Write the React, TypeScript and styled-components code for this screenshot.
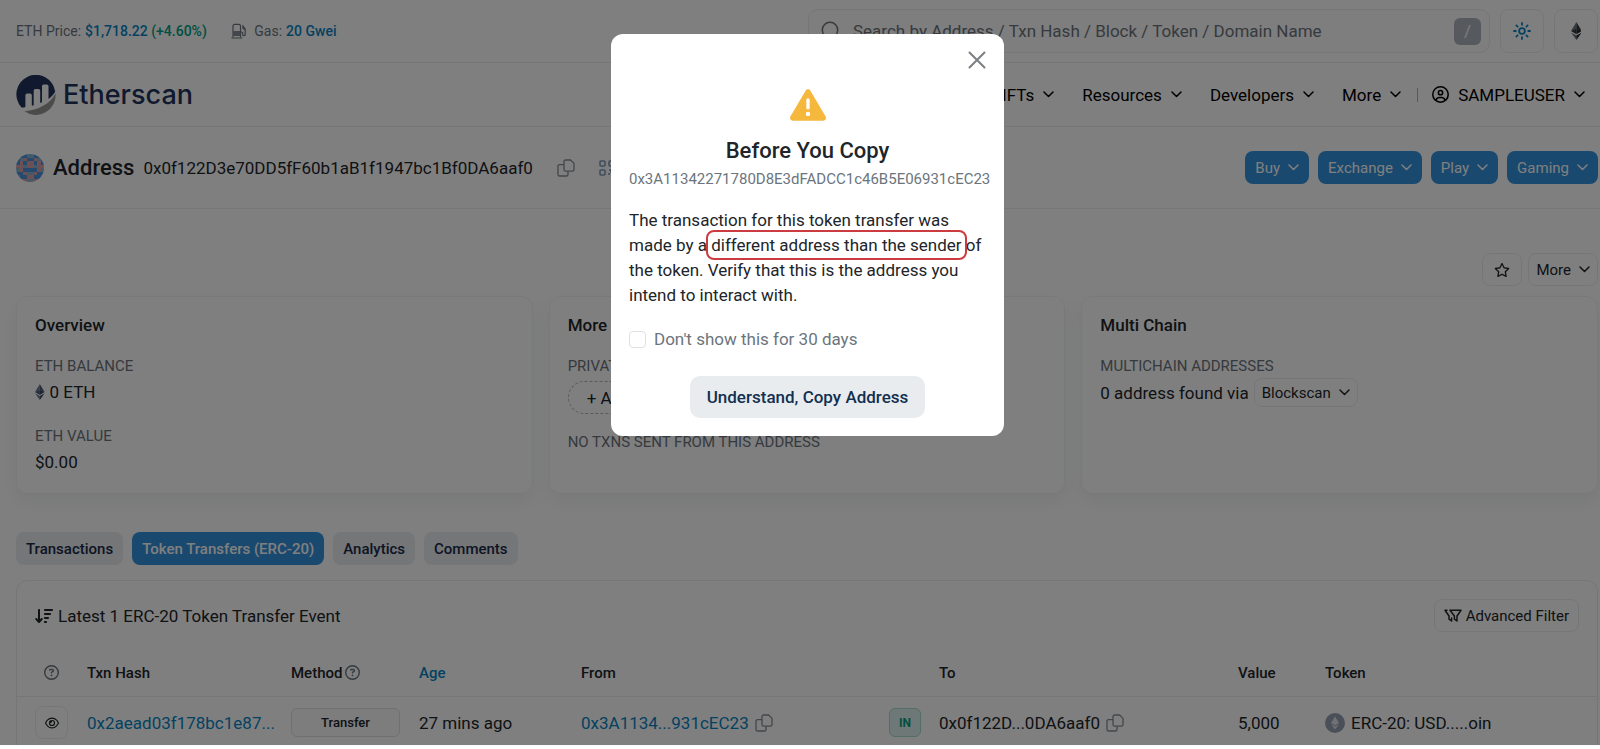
import React from "react";
import styled, { createGlobalStyle, css } from "styled-components";
import {
  FaTriangleExclamation,
  FaRegCircleQuestion,
  FaRegCircleUser,
  FaArrowDownWideShort,
  FaRegEye,
  FaRegStar,
} from "react-icons/fa6";

const GlobalStyle = createGlobalStyle`
  *, *::before, *::after { box-sizing: border-box; }
  body {
    margin: 0;
    background: #fff;
    color: #212529;
    font-family: Roboto, "Liberation Sans", sans-serif;
    font-size: 17px;
    line-height: 24px;
  }
  button, input { font: inherit; color: inherit; }
  button { cursor: pointer; }
  a { color: #0784c3; text-decoration: none; }
  h1, h2, h3, p { margin: 0; }
  svg { display: block; flex: none; }
`;

/* ---------- icons ---------- */

const Chevron = () => (
  <svg width="11" height="7" viewBox="0 0 11 7" fill="none" stroke="currentColor" strokeWidth="1.5" strokeLinecap="round" strokeLinejoin="round" aria-hidden="true">
    <path d="M1 1l4.5 4.5L10 1" />
  </svg>
);

const CopyIcon = () => (
  <svg width="18" height="18" viewBox="0 0 18 18" fill="none" stroke="#868e96" strokeWidth="1.3" strokeLinejoin="round" aria-hidden="true">
    <path d="M8.600 1h5L17 4.400v6.200a1.600 1.600 0 0 1-1.600 1.600H8.600A1.600 1.600 0 0 1 7 10.600V2.600A1.600 1.600 0 0 1 8.600 1z" />
    <path d="M7 5.600H2.600A1.600 1.600 0 0 0 1 7.200v8.200A1.600 1.600 0 0 0 2.600 17h6.800a1.600 1.600 0 0 0 1.600-1.600v-3.200" />
  </svg>
);

const QrIcon = () => (
  <svg width="16" height="16" viewBox="0 0 16 16" fill="none" stroke="#7f9bb5" strokeWidth="1.6" aria-hidden="true">
    <rect x="1" y="1" width="5" height="5" rx="1" />
    <rect x="10" y="1" width="5" height="5" rx="1" />
    <rect x="1" y="10" width="5" height="5" rx="1" />
    <path d="M10 10h2v2h3v3h-2M10 13v2" />
  </svg>
);

const GasIcon = () => (
  <svg width="16" height="16" viewBox="0 0 16 16" fill="none" stroke="#6c757d" strokeWidth="1.2" strokeLinecap="round" strokeLinejoin="round" aria-hidden="true">
    <path d="M2 14V3a1.600 1.600 0 0 1 1.600-1.600h4.300A1.600 1.600 0 0 1 9.500 3v11" />
    <rect x="2.300" y="8" width="7" height="5" fill="#868e96" stroke="none" />
    <path d="M.8 15h10M9.600 9h.9a1.200 1.200 0 0 1 1.200 1.200v1.300a1.200 1.200 0 0 0 2.500 0V6L11.700 2.600M12 3.500v2.200l2.200.8" />
  </svg>
);

const SearchIcon = () => (
  <svg width="20" height="20" viewBox="0 0 20 20" fill="none" stroke="#6c757d" strokeWidth="1.5" strokeLinecap="round" aria-hidden="true">
    <circle cx="9" cy="9" r="7.700" />
    <path d="M14.600 14.600L19 19" />
  </svg>
);

const SunIcon = () => (
  <svg width="18" height="18" viewBox="0 0 18 18" fill="none" stroke="#0784c3" strokeWidth="1.800" strokeLinecap="round" aria-hidden="true">
    <circle cx="9" cy="9" r="2.900" />
    <path d="M9 1v1.800M9 15.200V17M1 9h1.800M15.200 9H17M3.400 3.400l1.200 1.200M13.400 13.400l1.200 1.200M3.400 14.600l1.200-1.200M13.400 4.600l1.200-1.200" />
  </svg>
);

const EthIcon = ({ size = 18, dark = "#212529", mid = "#343a40", light = "#6c757d" }) => (
  <svg width={size * 0.6} height={size} viewBox="0 0 12 20" aria-hidden="true">
    <path d="M6 0L0 10l6-2.700z" fill={light} />
    <path d="M6 0l6 10-6-2.700z" fill={mid} />
    <path d="M0 10l6-2.700V13.600z" fill={mid} />
    <path d="M12 10L6 7.300v6.300z" fill={dark} />
    <path d="M0 11.600l6 3.500V20z" fill={light} />
    <path d="M12 11.600l-6 3.500V20z" fill={dark} />
  </svg>
);

const FilterIcon = () => (
  <svg width="18" height="14" viewBox="0 0 18 14" fill="none" stroke="currentColor" strokeWidth="1.500" strokeLinejoin="round" strokeLinecap="round" aria-hidden="true">
    <path d="M6 1.200h11L13 7v5l-2.600-1.800V7z" />
    <path d="M3 1.200H1L5 7v3.200L7.600 12V9" />
  </svg>
);

const CloseIcon = () => (
  <svg width="18" height="18" viewBox="0 0 18 18" fill="none" stroke="#7b7f83" strokeWidth="2" strokeLinecap="round" aria-hidden="true">
    <path d="M1.500 1.500l15 15M16.500 1.500l-15 15" />
  </svg>
);

const TokenIcon = () => (
  <svg width="20" height="20" viewBox="0 0 20 20" aria-hidden="true">
    <circle cx="10" cy="10" r="10" fill="#979eb0" />
    <path d="M10 3.500L6 10l4 2.400L14 10zM6 11.200l4 5.300 4-5.300-4 2.400z" fill="#dfe3ea" />
  </svg>
);

const LogoMark = () => (
  <svg width="40" height="40" viewBox="0 0 40 40" aria-hidden="true">
    <path
      fill="#21325b"
      d="M5.500 32.500A19.500 19.500 0 1 1 39.200 16.800c-1.700 3-4.200 5.300-6.700 7.100V11.300a1.700 1.700 0 0 0-1.700-1.700h-3.100a1.700 1.700 0 0 0-1.700 1.700v15.900l-1.800.9V15.700a1.700 1.700 0 0 0-1.700-1.700h-3.100a1.700 1.700 0 0 0-1.700 1.700v14.500l-1.900.5V20.200a1.700 1.700 0 0 0-1.700-1.700h-3a1.700 1.700 0 0 0-1.700 1.700v11c0 .7-.5 1.200-1.200 1.200z"
    />
    <path fill="#979695" d="M39.500 18.500A19.600 19.600 0 0 1 8.500 36.200C22 35.300 34.300 28.800 39.500 18.500z" />
  </svg>
);

const identicon = [
  "cbbccbbc",
  "bcpbbpcb",
  "bpbppbpb",
  "ppcppcpp",
  "cpbbbbpc",
  "bbpccpbb",
  "cbbppbbc",
  "pppccppp",
];
const identiconColors: Record<string, string> = { b: "#4a94dc", c: "#86b4d6", p: "#d9a0a8" };

const Identicon = () => (
  <svg width="28" height="28" viewBox="0 0 8 8" shapeRendering="crispEdges" aria-hidden="true">
    <clipPath id="avatar"><circle cx="4" cy="4" r="4" /></clipPath>
    <g clipPath="url(#avatar)">
      {identicon.flatMap((row, y) =>
        row.split("").map((c, x) => <rect key={`${x}-${y}`} x={x} y={y} width="1" height="1" fill={identiconColors[c]} />)
      )}
    </g>
  </svg>
);

/* ---------- layout ---------- */

const line = "#eaedf0";

const Page = styled.div`
  position: relative;
  overflow: hidden;
`;

const Bar = styled.div<{ $height: number }>`
  display: flex;
  align-items: center;
  justify-content: space-between;
  height: ${(p) => p.$height}px;
  padding: 0 2px 0 16px;
  border-bottom: 1px solid ${line};
`;

const Group = styled.div<{ $gap: number }>`
  display: flex;
  align-items: center;
  gap: ${(p) => p.$gap}px;
`;

const Stat = styled.span`
  display: inline-flex;
  align-items: center;
  gap: 4px;
  font-size: 14px;
  color: #6c757d;
  a { font-weight: 500; }
`;

const Up = styled.span`
  color: #00a186;
`;

const SearchBox = styled.label`
  display: flex;
  align-items: center;
  gap: 12px;
  width: 682px;
  height: 44px;
  padding: 0 8px 0 12px;
  border: 1px solid ${line};
  border-radius: 10px;
  background: #fcfcfd;
`;

const SearchInput = styled.input`
  flex: 1;
  min-width: 0;
  border: 0;
  padding: 0;
  background: transparent;
  outline: none;
  &::placeholder { color: #6c757d; opacity: 1; }
`;

const KeyHint = styled.kbd`
  display: grid;
  place-items: center;
  width: 27px;
  height: 27px;
  border-radius: 6px;
  background: #adb5bd;
  color: #f8f9fa;
  font: 17px Roboto, sans-serif;
`;

const SquareButton = styled.button<{ $size: number }>`
  display: grid;
  place-items: center;
  width: ${(p) => p.$size}px;
  height: ${(p) => p.$size}px;
  padding: 0;
  border: 1px solid ${line};
  border-radius: 8px;
  background: #fff;
`;

const Logo = styled.a`
  display: flex;
  align-items: center;
  gap: 7px;
  color: #21325b;
  font: 500 27px/32px Inter, sans-serif;
`;

const Nav = styled.nav`
  display: flex;
  align-items: center;
  gap: 28px;
  padding-right: 13px;
`;

const NavItem = styled.button`
  display: flex;
  align-items: center;
  gap: 9px;
  padding: 0;
  border: 0;
  background: none;
  color: #000;
`;

const Account = styled.div`
  display: flex;
  align-items: center;
  gap: 14px;
  margin-left: -12px;
`;

const Divider = styled.span`
  width: 1px;
  height: 14px;
  background: #adb5bd;
`;

const Title = styled.h1`
  font-size: 22px;
  font-weight: 500;
`;

const IconButton = styled.button`
  padding: 0;
  border: 0;
  background: none;
`;

const pill = css`
  display: inline-flex;
  align-items: center;
  justify-content: center;
  height: 33px;
  border-radius: 8px;
  font-size: 15px;
`;

const PrimaryButton = styled.button`
  ${pill}
  gap: 8px;
  padding: 0 10px;
  border: 0;
  background: #3392de;
  color: #fff;
`;

const OutlineButton = styled.button<{ $gap?: number; $pad?: number; $small?: boolean }>`
  ${pill}
  gap: ${(p) => p.$gap ?? 8}px;
  padding: 0 ${(p) => p.$pad ?? 7}px;
  border: 1px solid ${line};
  background: #fff;
  ${(p) => p.$small && "height: 29px;"}
`;

const Main = styled.main`
  padding: 44px 2px 0 16px;
`;

const Tools = styled.div`
  display: flex;
  justify-content: flex-end;
  gap: 6px;
`;

const Cards = styled.section`
  display: grid;
  grid-template-columns: repeat(3, 1fr);
  gap: 16px;
  margin-top: 10px;
`;

const Card = styled.article`
  min-height: 198px;
  padding: 16px 18px;
  border: 1px solid #f1f3f6;
  border-radius: 12px;
  box-shadow: 0 8px 18px rgba(140, 152, 164, 0.12);
`;

const CardTitle = styled.h3`
  font-size: 17px;
  font-weight: 500;
`;

const Field = styled.div<{ $top: number }>`
  margin-top: ${(p) => p.$top}px;
`;

const Label = styled.div`
  font-size: 15px;
  line-height: 24px;
  color: #6c757d;
  text-transform: uppercase;
`;

const Value = styled.div`
  display: flex;
  align-items: center;
  gap: 5px;
  min-height: 28px;
`;

const AddTag = styled.button`
  display: block;
  height: 33px;
  margin-top: 3px;
  padding: 0 18px;
  border: 1px dashed #adb5bd;
  border-radius: 17px;
  background: none;
`;

const Tabs = styled.div`
  display: flex;
  gap: 9px;
  margin-top: 38px;
`;

const Tab = styled.button<{ $active?: boolean }>`
  ${pill}
  padding: 0 10px;
  border: 0;
  font-weight: 500;
  background: ${(p) => (p.$active ? "#3392de" : "#e9ecef")};
  color: ${(p) => (p.$active ? "#fff" : "#1b2a4a")};
`;

const TableCard = styled.section`
  margin-top: 15px;
  border: 1px solid ${line};
  border-bottom: 0;
  border-radius: 12px 12px 0 0;
`;

const TableHead = styled.div`
  display: flex;
  align-items: center;
  justify-content: space-between;
  padding: 18px;
`;

const Table = styled.table`
  width: 100%;
  table-layout: fixed;
  border-collapse: collapse;

  th, td { padding: 0; text-align: left; white-space: nowrap; }
  th { height: 46px; font-size: 15px; font-weight: 500; border-bottom: 1px solid ${line}; }
  td { height: 49px; padding-top: 4px; }
  th:first-child, td:first-child { padding-left: 18px; }
`;

const HelpCell = styled.span`
  display: grid;
  place-items: center;
  width: 33px;
  color: #6c757d;
`;

const HeadLabel = styled.span`
  display: inline-flex;
  align-items: center;
  gap: 3px;
  svg { color: #6c757d; }
`;

const MethodTag = styled.span`
  display: grid;
  place-items: center;
  width: 109px;
  height: 29px;
  border: 1px solid #dde1e5;
  border-radius: 6px;
  background: #fafbfc;
  font-size: 13px;
  font-weight: 500;
`;

const InTag = styled.span`
  display: grid;
  place-items: center;
  width: 32px;
  height: 29px;
  border: 1px solid #a3dccf;
  border-radius: 6px;
  background: #dcf2ee;
  color: #00a186;
  font-size: 12px;
  font-weight: 700;
`;

/* ---------- dialog ---------- */

const Backdrop = styled.div`
  position: absolute;
  inset: 0;
  display: flex;
  justify-content: center;
  align-items: flex-start;
  padding: 34px 0 0 15px;
  background: rgba(0, 0, 0, 0.5);
`;

const Dialog = styled.div`
  position: relative;
  width: 393px;
  padding: 53px 18px 18px;
  border-radius: 12px;
  background: #fff;
  display: flex;
  flex-direction: column;
`;

const Close = styled(IconButton)`
  position: absolute;
  top: 17px;
  right: 18px;
`;

const Warning = styled.div`
  align-self: center;
  color: #f5b83d;
`;

const DialogTitle = styled.h2`
  margin-top: 12px;
  text-align: center;
  font-size: 22px;
  line-height: 32px;
  font-weight: 500;
`;

const DialogHash = styled.p`
  text-align: center;
  font-size: 15px;
  color: #6c757d;
`;

const Message = styled.p`
  margin-top: 17px;
  line-height: 25px;
`;

const Marked = styled.mark`
  background: none;
  color: inherit;
  outline: 2px solid #cc3b40;
  outline-offset: 3px;
  border-radius: 3px;
`;

const CheckLabel = styled.label`
  display: flex;
  align-items: center;
  gap: 8px;
  margin-top: 19px;
  color: #6c757d;
`;

const Check = styled.input`
  appearance: none;
  width: 17px;
  height: 17px;
  margin: 0;
  border: 1px solid #dde1e6;
  border-radius: 4px;
  background: #fff;
`;

const Confirm = styled.button`
  align-self: center;
  height: 42px;
  margin-top: 25px;
  padding: 0 17px;
  border: 0;
  border-radius: 10px;
  background: #e9ecef;
  color: #12304f;
  font-weight: 500;
`;

export default function App() {
  return (
    <Page>
      <GlobalStyle />
      <Bar $height={63}>
        <Group $gap={24}>
          <Stat>ETH Price: <a href="#price">$1,718.22 <Up>(+4.60%)</Up></a></Stat>
          <Stat><GasIcon />&nbsp;Gas: <a href="#gas">20 Gwei</a></Stat>
        </Group>
        <Group $gap={10}>
          <SearchBox>
            <SearchIcon />
            <SearchInput aria-label="Search" placeholder="Search by Address / Txn Hash / Block / Token / Domain Name" />
            <KeyHint>/</KeyHint>
          </SearchBox>
          <SquareButton $size={44} aria-label="Theme"><SunIcon /></SquareButton>
          <SquareButton $size={44} aria-label="Network"><EthIcon /></SquareButton>
        </Group>
      </Bar>

      <Bar $height={64} as="header">
        <Logo href="#home"><LogoMark />Etherscan</Logo>
        <Nav>
          {["NFTs", "Resources", "Developers", "More"].map((item) => (
            <NavItem key={item}>{item}<Chevron /></NavItem>
          ))}
          <Account>
            <Divider />
            <NavItem><FaRegCircleUser size={17} />SAMPLEUSER<Chevron /></NavItem>
          </Account>
        </Nav>
      </Bar>

      <Bar $height={82}>
        <Group $gap={9}>
          <Identicon />
          <Title>Address</Title>
          <Group $gap={24}>
            <span>0x0f122D3e70DD5fF60b1aB1f1947bc1Bf0DA6aaf0</span>
            <IconButton aria-label="Copy address"><CopyIcon /></IconButton>
            <IconButton aria-label="Show QR code"><QrIcon /></IconButton>
          </Group>
        </Group>
        <Group $gap={9}>
          {["Buy", "Exchange", "Play", "Gaming"].map((item) => (
            <PrimaryButton key={item}>{item}<Chevron /></PrimaryButton>
          ))}
        </Group>
      </Bar>

      <Main>
        <Tools>
          <OutlineButton $pad={11} aria-label="Add to watch list"><FaRegStar size={16} /></OutlineButton>
          <OutlineButton>More<Chevron /></OutlineButton>
        </Tools>

        <Cards>
          <Card>
            <CardTitle>Overview</CardTitle>
            <Field $top={17}>
              <Label>ETH Balance</Label>
              <Value><EthIcon size={16} dark="#3c4a63" mid="#4a5a78" light="#6b7a96" />0 ETH</Value>
            </Field>
            <Field $top={18}>
              <Label>ETH Value</Label>
              <Value>$0.00</Value>
            </Field>
          </Card>
          <Card>
            <CardTitle>More Info</CardTitle>
            <Field $top={17}>
              <Label>Private Name Tags</Label>
              <AddTag>+ Add</AddTag>
            </Field>
            <Field $top={16}>
              <Label>No txns sent from this address</Label>
            </Field>
          </Card>
          <Card>
            <CardTitle>Multi Chain</CardTitle>
            <Field $top={17}>
              <Label>Multichain Addresses</Label>
              <Value>0 address found via <OutlineButton $small>Blockscan<Chevron /></OutlineButton></Value>
            </Field>
          </Card>
        </Cards>

        <Tabs>
          <Tab>Transactions</Tab>
          <Tab $active>Token Transfers (ERC-20)</Tab>
          <Tab>Analytics</Tab>
          <Tab>Comments</Tab>
        </Tabs>

        <TableCard>
          <TableHead>
            <Group $gap={5}><FaArrowDownWideShort size={18} />Latest 1 ERC-20 Token Transfer Event</Group>
            <OutlineButton $gap={4} $pad={9}><FilterIcon />Advanced Filter</OutlineButton>
          </TableHead>
          <Table>
            <colgroup>
              <col style={{ width: 70 }} />
              <col style={{ width: 204 }} />
              <col style={{ width: 128 }} />
              <col style={{ width: 162 }} />
              <col style={{ width: 308 }} />
              <col style={{ width: 50 }} />
              <col style={{ width: 299 }} />
              <col style={{ width: 87 }} />
              <col />
            </colgroup>
            <thead>
              <tr>
                <th><HelpCell><FaRegCircleQuestion size={15} /></HelpCell></th>
                <th>Txn Hash</th>
                <th><HeadLabel>Method<FaRegCircleQuestion size={15} /></HeadLabel></th>
                <th><a href="#age">Age</a></th>
                <th>From</th>
                <th aria-label="Direction" />
                <th>To</th>
                <th>Value</th>
                <th>Token</th>
              </tr>
            </thead>
            <tbody>
              <tr>
                <td><SquareButton $size={33} aria-label="Preview"><FaRegEye size={14} /></SquareButton></td>
                <td><a href="#txn">0x2aead03f178bc1e87...</a></td>
                <td><MethodTag>Transfer</MethodTag></td>
                <td>27 mins ago</td>
                <td>
                  <Group $gap={6}><a href="#from">0x3A1134...931cEC23</a><IconButton aria-label="Copy sender"><CopyIcon /></IconButton></Group>
                </td>
                <td><InTag>IN</InTag></td>
                <td>
                  <Group $gap={6}>0x0f122D...0DA6aaf0<IconButton aria-label="Copy recipient"><CopyIcon /></IconButton></Group>
                </td>
                <td>5,000</td>
                <td><Group $gap={6}><TokenIcon />ERC-20: USD.....oin</Group></td>
              </tr>
            </tbody>
          </Table>
        </TableCard>
      </Main>

      <Backdrop>
        <Dialog role="dialog" aria-modal="true" aria-labelledby="dialog-title">
          <Close aria-label="Close"><CloseIcon /></Close>
          <Warning><FaTriangleExclamation size={36} /></Warning>
          <DialogTitle id="dialog-title">Before You Copy</DialogTitle>
          <DialogHash>0x3A11342271780D8E3dFADCC1c46B5E06931cEC23</DialogHash>
          <Message>
            The transaction for this token transfer was made by a <Marked>different address than the sender</Marked> of
            the token. Verify that this is the address you intend to interact with.
          </Message>
          <CheckLabel><Check type="checkbox" />Don't show this for 30 days</CheckLabel>
          <Confirm>Understand, Copy Address</Confirm>
        </Dialog>
      </Backdrop>
    </Page>
  );
}
